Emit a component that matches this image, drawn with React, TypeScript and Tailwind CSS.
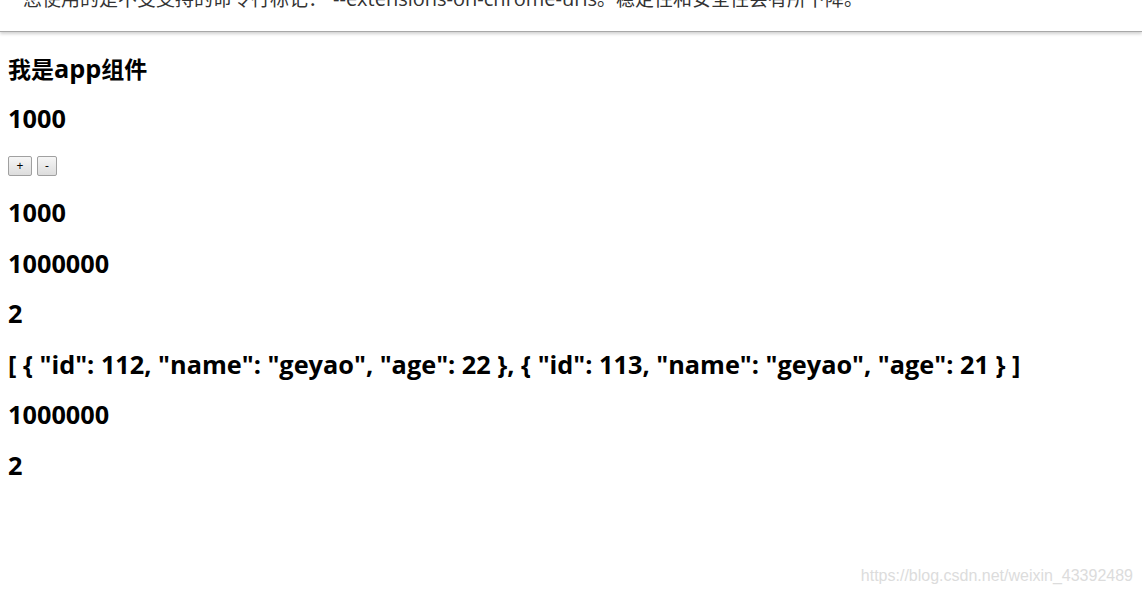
const users = [
  { id: 112, name: "geyao", age: 22 },
  { id: 113, name: "geyao", age: 21 },
];

const heading = "text-[25.3px] font-bold leading-[30px] text-black";

function fmt(list: typeof users) {
  return (
    "[ " +
    list
      .map((u) => `{ "id": ${u.id}, "name": "${u.name}", "age": ${u.age} }`)
      .join(", ") +
    " ]"
  );
}

export default function App() {
  return (
    <div
      className="relative w-[1142px] h-[597px] overflow-hidden bg-white"
      style={{ fontFamily: '"Open Sans", "Noto Sans CJK SC", sans-serif' }}
    >
      {/* cropped warning bar */}
      <div className="relative h-[32px] overflow-hidden border-b border-[#a8a8a8] shadow-[0_2px_3px_rgba(0,0,0,0.18)]">
        <p className="mt-[-11px] pl-[23px] text-[19px] leading-[19px] text-[#333] whitespace-nowrap">
          您使用的是不受支持的命令行标记：
          <span className="ml-[6px] text-[20px]">--extensions-on-chrome-urls</span>
          。稳定性和安全性会有所下降。
        </p>
      </div>

      <div className="flex flex-col items-start px-[8px]">
        <h3 className={`${heading} mt-[21px]`}>
          <span className="text-[23px]">我是</span>app<span className="text-[23px]">组件</span>
        </h3>
        <h3 className={`${heading} mt-[19px]`}>1000</h3>
        <div className="mt-[23px] flex gap-[5px]">
          <button className="h-[20px] w-[24px] rounded-[2px] border border-[#a0a0a0] bg-gradient-to-b from-[#f6f6f6] to-[#dddddd] text-[12px] leading-none text-black">
            +
          </button>
          <button className="h-[20px] w-[20px] rounded-[2px] border border-[#a0a0a0] bg-gradient-to-b from-[#f6f6f6] to-[#dddddd] text-[12px] leading-none text-black">
            -
          </button>
        </div>
        <h3 className={`${heading} mt-[21px]`}>1000</h3>
        <h3 className={`${heading} mt-[21px]`}>1000000</h3>
        <h3 className={`${heading} mt-[20px]`}>2</h3>
        <h3 className={`${heading} mt-[21px]`}>{fmt(users)}</h3>
        <h3 className={`${heading} mt-[20px]`}>1000000</h3>
        <h3 className={`${heading} mt-[21px]`}>2</h3>
      </div>

      <span
        className="absolute right-[9px] bottom-[9px] text-[16px] text-[#dcdcdc]"
        style={{ fontFamily: '"Liberation Sans", Arial, sans-serif' }}
      >
        https://blog.csdn.net/weixin_43392489
      </span>
    </div>
  );
}
